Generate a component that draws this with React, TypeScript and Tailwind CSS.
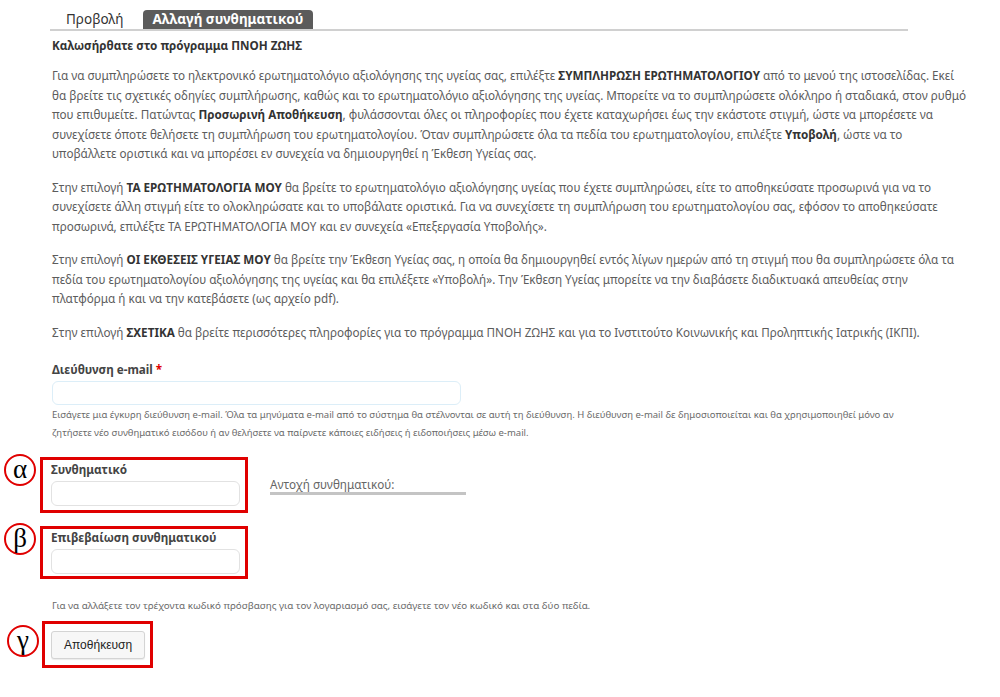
import React from "react";

const font = { fontFamily: '"Noto Sans", "Open Sans", sans-serif' };

const Marker = ({ letter, className }: { letter: string; className: string }) => (
  <div
    className={`absolute flex h-[32px] w-[32px] items-center justify-center rounded-full border-2 border-[#e00000] bg-white pb-[2px] text-[27px] leading-none text-black ${className}`}
    style={{ fontFamily: '"Liberation Serif", serif' }}
  >
    {letter}
  </div>
);

const Field = ({ label }: { label: string }) => (
  <div className="flex flex-col">
    <label className="text-[11.7px] font-bold text-[#444] leading-[16px]">{label}</label>
    <input
      type="password"
      className="mt-[4px] block h-[25px] w-[189px] rounded-[6px] border border-[#e2e2e2] bg-white outline-none"
    />
  </div>
);

export default function App() {
  return (
    <div className="min-h-[697px] w-[1000px] bg-white text-[#5c5c5c]" style={font}>
      <div className="w-[908px] pl-[52px] pt-[10px]">
        {/* TABS */}
        <div className="-ml-[2px] flex items-end border-b-2 border-[#d0d0d0]">
          <span className="ml-[16px] text-[13.5px] leading-[19px] text-[#333]">Προβολή</span>
          <span className="ml-[19px] rounded-t-[4px] bg-[#5b5b5b] px-[10px] text-[13.5px] font-bold leading-[19px] text-white">
            Αλλαγή συνθηματικού
          </span>
        </div>

        <h2 className="mt-[6px] text-[11.7px] font-bold leading-[16px] text-[#333]">
          Καλωσήρθατε στο πρόγραμμα ΠΝΟΗ ΖΩΗΣ
        </h2>

        <div className="mt-[13px] flex flex-col gap-[14px] whitespace-nowrap text-[11.7px] leading-[19.5px]">
          <p>
            Για να συμπληρώσετε το ηλεκτρονικό ερωτηματολόγιο αξιολόγησης της υγείας σας, επιλέξτε{" "}
            <b className="text-[#333]">ΣΥΜΠΛΗΡΩΣΗ ΕΡΩΤΗΜΑΤΟΛΟΓΙΟΥ</b> από το μενού της ιστοσελίδας. Εκεί
            <br />
            θα βρείτε τις σχετικές οδηγίες συμπλήρωσης, καθώς και το ερωτηματολόγιο αξιολόγησης της υγείας. Μπορείτε να το συμπληρώσετε ολόκληρο ή σταδιακά, στον ρυθμό
            <br />
            που επιθυμείτε. Πατώντας <b className="text-[#333]">Προσωρινή Αποθήκευση</b>, φυλάσσονται όλες οι πληροφορίες που έχετε καταχωρήσει έως την εκάστοτε στιγμή, ώστε να μπορέσετε να
            <br />
            συνεχίσετε όποτε θελήσετε τη συμπλήρωση του ερωτηματολογίου. Όταν συμπληρώσετε όλα τα πεδία του ερωτηματολογίου, επιλέξτε{" "}
            <b className="text-[#333]">Υποβολή</b>, ώστε να το
            <br />
            υποβάλλετε οριστικά και να μπορέσει εν συνεχεία να δημιουργηθεί η Έκθεση Υγείας σας.
          </p>
          <p>
            Στην επιλογή <b className="text-[#333]">ΤΑ ΕΡΩΤΗΜΑΤΟΛΟΓΙΑ ΜΟΥ</b> θα βρείτε το ερωτηματολόγιο αξιολόγησης υγείας που έχετε συμπληρώσει, είτε το αποθηκεύσατε προσωρινά για να το
            <br />
            συνεχίσετε άλλη στιγμή είτε το ολοκληρώσατε και το υποβάλατε οριστικά. Για να συνεχίσετε τη συμπλήρωση του ερωτηματολογίου σας, εφόσον το αποθηκεύσατε
            <br />
            προσωρινά, επιλέξτε ΤΑ ΕΡΩΤΗΜΑΤΟΛΟΓΙΑ ΜΟΥ και εν συνεχεία «Επεξεργασία Υποβολής».
          </p>
          <p>
            Στην επιλογή <b className="text-[#333]">ΟΙ ΕΚΘΕΣΕΙΣ ΥΓΕΙΑΣ ΜΟΥ</b> θα βρείτε την Έκθεση Υγείας σας, η οποία θα δημιουργηθεί εντός λίγων ημερών από τη στιγμή που θα συμπληρώσετε όλα τα
            <br />
            πεδία του ερωτηματολογίου αξιολόγησης της υγείας και θα επιλέξετε «Υποβολή». Την Έκθεση Υγείας μπορείτε να την διαβάσετε διαδικτυακά απευθείας στην
            <br />
            πλατφόρμα ή και να την κατεβάσετε (ως αρχείο pdf).
          </p>
          <p>
            Στην επιλογή <b className="text-[#333]">ΣΧΕΤΙΚΑ</b> θα βρείτε περισσότερες πληροφορίες για το πρόγραμμα ΠΝΟΗ ΖΩΗΣ και για το Ινστιτούτο Κοινωνικής και Προληπτικής Ιατρικής (ΙΚΠΙ).
          </p>
        </div>

        {/* EMAIL */}
        <div className="mt-[19px] flex flex-col">
          <label className="text-[11.7px] font-bold leading-[16px] text-[#444]">
            Διεύθυνση e-mail <span className="text-[#e00000]">*</span>
          </label>
          <input
            type="email"
            className="mt-[4px] block h-[24px] w-[409px] rounded-[6px] border border-[#dceef8] bg-white outline-none"
          />
          <p className="mt-[1px] whitespace-nowrap text-[9.5px] leading-[18px] text-[#6a6a6a]">
            Εισάγετε μια έγκυρη διεύθυνση e-mail. Όλα τα μηνύματα e-mail από το σύστημα θα στέλνονται σε αυτή τη διεύθυνση. Η διεύθυνση e-mail δε δημοσιοποιείται και θα χρησιμοποιηθεί μόνο αν
            <br />
            ζητήσετε νέο συνθηματικό εισόδου ή αν θελήσετε να παίρνετε κάποιες ειδήσεις ή ειδοποιήσεις μέσω e-mail.
          </p>
        </div>

        {/* PASSWORD */}
        <div className="mt-[15px] flex items-start gap-[22px]">
          <div className="relative -ml-[12px] border-[3px] border-[#e00000] pl-[8px] pr-[5px] pt-[1px] pb-[4px]">
            <Marker letter="α" className="-left-[39px] -top-[6px]" />
            <Field label="Συνθηματικό" />
          </div>
          <div className="mt-[19px] flex w-[196px] flex-col">
            <span className="text-[11.7px] leading-[16px] text-[#666]">Αντοχή συνθηματικού:</span>
            <div className="h-[3px] w-full bg-[#c4c4c4]" />
          </div>
        </div>

        <div className="mt-[13px] flex">
          <div className="relative -ml-[12px] border-[3px] border-[#e00000] pl-[8px] pr-[5px] pt-[0px] pb-[2px]">
            <Marker letter="β" className="-left-[39px] -top-[6px]" />
            <Field label="Επιβεβαίωση συνθηματικού" />
          </div>
        </div>

        <p className="mt-[19px] whitespace-nowrap text-[9.8px] leading-[16px] text-[#6a6a6a]">
          Για να αλλάξετε τον τρέχοντα κωδικό πρόσβασης για τον λογαριασμό σας, εισάγετε τον νέο κωδικό και στα δύο πεδία.
        </p>

        <div className="mt-[7px] flex">
          <div className="relative -ml-[10px] border-[3px] border-[#e00000] pl-[6px] pr-[5px] pt-[7px] pb-[6px]">
            <Marker letter="γ" className="-left-[38px] top-[1px]" />
            <button
              className="block h-[28px] rounded-[3px] border border-[#d4d4d4] bg-[#f7f7f7] px-[12px] text-[12px] text-[#222] shadow-[0_1px_1px_rgba(0,0,0,0.08)]"
              style={{ fontFamily: '"Liberation Sans", Arial, sans-serif' }}
            >
              Αποθήκευση
            </button>
          </div>
        </div>
      </div>
    </div>
  );
}
